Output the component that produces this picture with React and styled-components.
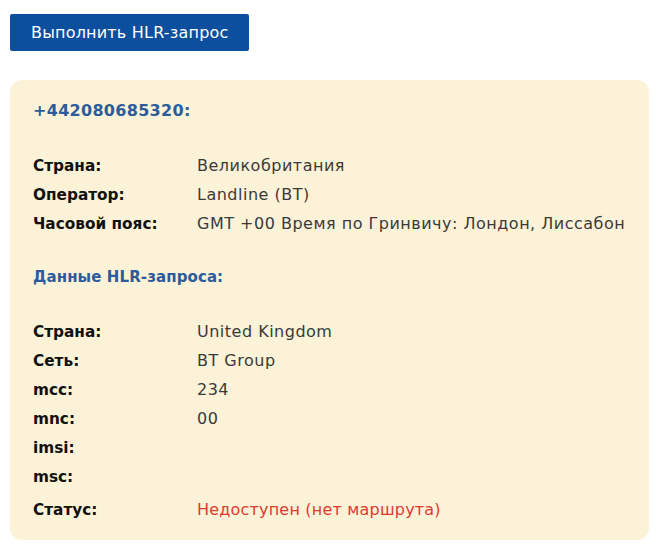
import React from "react";
import styled, { createGlobalStyle } from "styled-components";

const GlobalStyle = createGlobalStyle`
  body {
    margin: 0;
    background: #fff;
    font-family: "DejaVu Sans", "Noto Sans", sans-serif;
  }
`;

const Page = styled.div`
  padding: 14px 13px 17px 10px;
`;

const Button = styled.button`
  display: block;
  height: 37px;
  padding: 0 21px;
  border: none;
  border-radius: 2px;
  background: #0c4f9f;
  color: #fff;
  font-family: inherit;
  font-size: 16px;
  letter-spacing: 0.2px;
  cursor: pointer;
`;

const Card = styled.div`
  margin-top: 29px;
  background: #fcf2d7;
  border-radius: 12px;
  padding: 19px 23px 16px;
`;

const Heading = styled.div`
  color: #2d5b9c;
  font-weight: bold;
  font-size: ${(p) => (p.$big ? "16px" : "15px")};
  letter-spacing: ${(p) => (p.$big ? "0.3px" : "0.1px")};
  line-height: 24px;
  margin-top: ${(p) => p.$top || 0}px;
`;

const Rows = styled.div`
  margin-top: ${(p) => p.$top || 0}px;
  display: grid;
  grid-template-columns: 164px 1fr;
  grid-auto-rows: 29px;
  align-items: baseline;
`;

const Label = styled.div`
  line-height: 29px;
  font-size: 15.3px;
  font-weight: bold;
  color: #111;
`;

const Value = styled.div`
  line-height: 29px;
  font-size: 16px;
  letter-spacing: ${(p) => (p.$alert ? "0.2px" : "0.5px")};
  color: ${(p) => (p.$alert ? "#dd3b30" : "#3a3a3a")};
  white-space: nowrap;
`;

const first = [
  ["Страна:", "Великобритания"],
  ["Оператор:", "Landline (BT)"],
  ["Часовой пояс:", "GMT +00 Время по Гринвичу: Лондон, Лиссабон"],
];

const second = [
  ["Страна:", "United Kingdom"],
  ["Сеть:", "BT Group"],
  ["mcc:", "234"],
  ["mnc:", "00"],
  ["imsi:", ""],
  ["msc:", ""],
];

const Row = ({ label, value, alert }) => (
  <>
    <Label>{label}</Label>
    <Value $alert={alert}>{value || "\u00a0"}</Value>
  </>
);

export default function App() {
  return (
    <Page>
      <GlobalStyle />
      <Button>Выполнить HLR-запрос</Button>
      <Card>
        <Heading $big>+442080685320:</Heading>
        <Rows $top={28}>
          {first.map(([l, v]) => (
            <Row key={l} label={l} value={v} />
          ))}
        </Rows>
        <Heading $top={27}>Данные HLR-запроса:</Heading>
        <Rows $top={28}>
          {second.map(([l, v]) => (
            <Row key={l} label={l} value={v} />
          ))}
        </Rows>
        <Rows $top={4}>
          <Row label="Статус:" value="Недоступен (нет маршрута)" alert />
        </Rows>
      </Card>
    </Page>
  );
}
